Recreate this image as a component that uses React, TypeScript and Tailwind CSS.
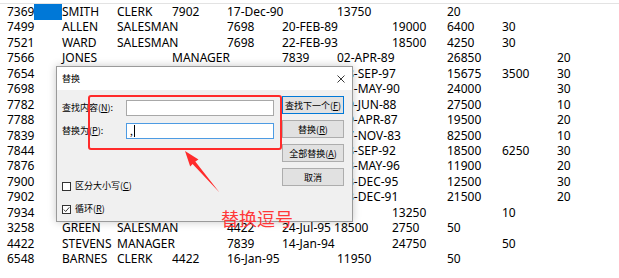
import React from "react";

type Cell = [number, string];

const rows: Cell[][] = [
  [[0, "7369"], [1, "SMITH"], [2, "CLERK"], [3, "7902"], [4, "17-Dec-90"], [6, "13750"], [8, "20"]],
  [[0, "7499"], [1, "ALLEN"], [2, "SALESMAN"], [4, "7698"], [5, "20-FEB-89"], [7, "19000"], [8, "6400"], [9, "30"]],
  [[0, "7521"], [1, "WARD"], [2, "SALESMAN"], [4, "7698"], [5, "22-FEB-93"], [7, "18500"], [8, "4250"], [9, "30"]],
  [[0, "7566"], [1, "JONES"], [3, "MANAGER"], [5, "7839"], [6, "02-APR-89"], [8, "26850"], [10, "20"]],
  [[0, "7654"], [1, "MARTIN"], [2, "SALESMAN"], [4, "7698"], [6, " 28-SEP-97"], [8, "15675"], [9, "3500"], [10, "30"]],
  [[0, "7698"], [1, "BLAKE"], [2, "MANAGER"], [4, "7839"], [6, " 01-MAY-90"], [8, "24000"], [10, "30"]],
  [[0, "7782"], [1, "CLARK"], [2, "MANAGER"], [4, "7839"], [6, " 09-JUN-88"], [8, "27500"], [10, "10"]],
  [[0, "7788"], [1, "SCOTT"], [2, "ANALYST"], [4, "7566"], [6, " 19-APR-87"], [8, "19500"], [10, "20"]],
  [[0, "7839"], [1, "KING"], [2, "PRESIDENT"], [6, " 17-NOV-83"], [8, "82500"], [10, "10"]],
  [[0, "7844"], [1, "TURNER"], [2, "SALESMAN"], [4, "7698"], [6, " 08-SEP-92"], [8, "18500"], [9, "6250"], [10, "30"]],
  [[0, "7876"], [1, "ADAMS"], [2, "CLERK"], [4, "7788"], [6, " 23-MAY-96"], [8, "11900"], [10, "20"]],
  [[0, "7900"], [1, "JAMES"], [2, "CLERK"], [4, "7698"], [6, " 03-DEC-95"], [8, "12500"], [10, "30"]],
  [[0, "7902"], [1, "FORD"], [2, "ANALYST"], [4, "7566"], [6, " 03-DEC-91"], [8, "21500"], [10, "20"]],
  [[0, "7934"], [1, "MILLER"], [2, "CLERK"], [3, "7782"], [5, "23-JAN-82"], [7, "13250"], [9, "10"]],
  [[0, "3258"], [1, "GREEN"], [2, "SALESMAN"], [4, "4422"], [5, "24-Jul-95 18500"], [7, "2750"], [8, "50"]],
  [[0, "4422"], [1, "STEVENS"], [2, "MANAGER"], [4, "7839"], [5, "14-Jan-94"], [7, "24750"], [9, "50"]],
  [[0, "6548"], [1, "BARNES"], [2, "CLERK"], [3, "4422"], [4, "16-Jan-95"], [6, "11950"], [8, "50"]],
];

const colStart = [
  "col-start-1",
  "col-start-2",
  "col-start-3",
  "col-start-4",
  "col-start-5",
  "col-start-6",
  "col-start-7",
  "col-start-8",
  "col-start-9",
  "col-start-10",
  "col-start-11",
];

function Mn({ pre, k, post }: { pre: string; k: string; post: string }) {
  return (
    <span className="whitespace-pre">
      {pre}
      <span className="underline underline-offset-[1px]">{k}</span>
      {post}
    </span>
  );
}

function Btn({ children, primary }: { children: React.ReactNode; primary?: boolean }) {
  return (
    <div
      className={
        "flex h-[18px] w-[62px] items-center justify-center border bg-[#e1e1e1] text-[9px] leading-none text-black " +
        (primary ? "border-[#0078d7]" : "border-[#adadad]")
      }
    >
      {children}
    </div>
  );
}

export default function App() {
  return (
    <div className="relative h-[278px] w-[619px] overflow-hidden bg-white font-['Noto_Sans','Noto_Sans_CJK_SC',sans-serif] text-[12px] text-black">
      <div className="h-[4px] border-b border-[#e3e3e3]" />
      <div className="pl-[7px]">
        {rows.map((r, i) => (
          <div
            key={i}
            className="grid h-[15.44px] grid-cols-[repeat(11,55px)] leading-[15.44px]"
          >
            {r.map(([c, t]) =>
              i === 0 && c === 0 ? (
                <div key={c} className={colStart[c] + " row-start-1 flex min-w-0"}>
                  <span>{t}</span>
                  <span className="h-[16px] flex-1 bg-[#0078d7]" />
                </div>
              ) : (
                <div key={c} className={colStart[c] + " row-start-1 min-w-0 whitespace-pre"}>
                  {t}
                </div>
              )
            )}
          </div>
        ))}
      </div>

      {/* Replace dialog */}
      <div className="absolute left-[56px] top-[66px] flex h-[156px] w-[297px] flex-col border border-[#9a9a9a] bg-[#f0f0f0] font-['Noto_Sans_CJK_SC',sans-serif] shadow-[0_0_8px_rgba(0,0,0,0.22)]">
        <div className="flex h-[23px] items-center justify-between bg-white pl-[5px] pr-[7px] text-[9px]">
          <span>替换</span>
          <svg width="8" height="8" viewBox="0 0 8 8" className="block">
            <path d="M0.5 0.5 L7.5 7.5 M7.5 0.5 L0.5 7.5" stroke="#222" strokeWidth="0.9" fill="none" />
          </svg>
        </div>
        <div className="flex flex-1">
          <div className="flex flex-1 flex-col pl-[5px] pt-[10px] text-[9px]">
            <div className="flex h-[16px] items-center">
              <span className="w-[64px]">
                <Mn pre="查找内容(" k="N" post="):" />
              </span>
              <div className="h-[16px] w-[148px] border border-[#a8a8a8] bg-white" />
            </div>
            <div className="mt-[7px] flex h-[16px] items-center">
              <span className="w-[64px]">
                <Mn pre="替换为(" k="P" post="):" />
              </span>
              <div className="flex h-[16px] w-[148px] items-center border border-[#4d9be3] bg-white pl-[3px] text-[10px]">
                <span className="leading-none">,</span>
                <span className="ml-[1px] h-[12px] w-[1px] bg-black" />
              </div>
            </div>
            <div className="mt-[41px] flex h-[12px] items-center gap-[4px]">
              <span className="h-[9px] w-[9px] border border-[#333] bg-white" />
              <Mn pre="区分大小写(" k="C" post=")" />
            </div>
            <div className="mt-[11px] flex h-[12px] items-center gap-[4px]">
              <span className="flex h-[9px] w-[9px] items-center justify-center border border-[#333] bg-white">
                <svg width="7" height="7" viewBox="0 0 7 7" className="block">
                  <path d="M0.8 3.6 L2.7 5.5 L6.3 1.3" stroke="#222" strokeWidth="0.9" fill="none" />
                </svg>
              </span>
              <Mn pre="循环(" k="R" post=")" />
            </div>
          </div>
          <div className="flex flex-col gap-[6px] pr-[8px] pt-[6px]">
            <Btn primary>
              <Mn pre="查找下一个(" k="F" post=")" />
            </Btn>
            <Btn>
              <Mn pre="替换(" k="R" post=")" />
            </Btn>
            <Btn>
              <Mn pre="全部替换(" k="A" post=")" />
            </Btn>
            <Btn>取消</Btn>
          </div>
        </div>
      </div>

      {/* Annotation: red box */}
      <div className="absolute left-[88px] top-[95px] h-[55px] w-[194px] rounded-[3px] border-2 border-[#ff2b2b]" />

      {/* Annotation: arrow */}
      <svg className="absolute left-0 top-0" width="619" height="278" viewBox="0 0 619 278">
        <polygon
          points="185,151 198.5,159.5 195.3,161.6 219.5,192.5 192.6,163.9 190.2,166.5"
          fill="#ff2b2b"
        />
      </svg>

      {/* Annotation: label */}
      <div className="absolute left-[221px] top-[206px] font-['Noto_Sans_CJK_SC',sans-serif] text-[18px] leading-[24px] text-[#ff3838]">
        替换逗号
      </div>
    </div>
  );
}
